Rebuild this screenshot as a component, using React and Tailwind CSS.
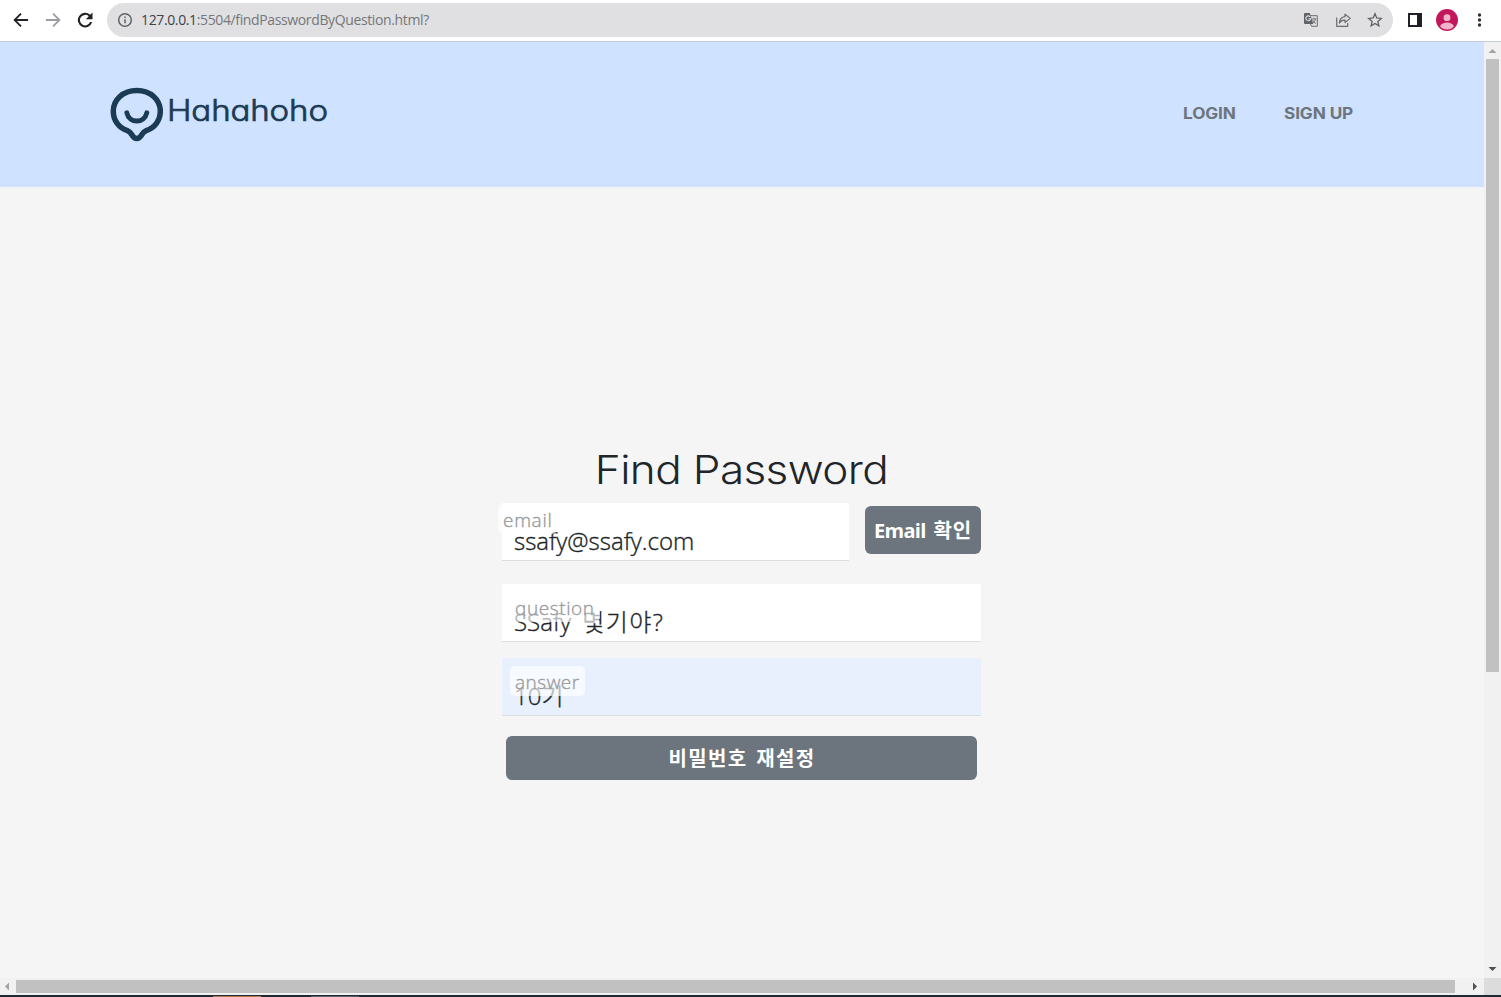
const bar = "flex items-center";

function Toolbar() {
  return (
    <div className={`${bar} h-[42px] shrink-0 border-b border-[#c4cbd6] bg-white pb-px`}>
      <svg className="ml-[11px] shrink-0" width="20" height="20" viewBox="0 0 24 24" fill="#202124">
        <path d="M20.5 10.9H7.1l5.7-5.7L11.2 3.600 2.800 12l8.400 8.400 1.600-1.600-5.700-5.700h13.400z" />
      </svg>
      <svg className="ml-3 shrink-0" width="20" height="20" viewBox="0 0 24 24" fill="#9b9da0">
        <path d="M3.500 10.900h13.400l-5.700-5.700 1.600-1.600 8.400 8.400-8.400 8.400-1.600-1.600 5.700-5.700H3.500z" />
      </svg>
      <svg className="ml-3 shrink-0" width="20" height="20" viewBox="0 0 24 24" fill="#202124">
        <path d="M18.2 5.800A8.750 8.750 0 1 0 20.600 14.500h-2.500A6.300 6.300 0 1 1 16.500 7.500L13 11h8V3z" />
      </svg>
      <div className={`${bar} ml-3 h-[34px] w-[1286px] rounded-full bg-[#e0e0e2] pl-[10px] pr-[10px]`}>
        <svg width="16" height="16" viewBox="0 0 16 16" fill="none" stroke="#5f6368" strokeWidth="1.5">
          <circle cx="8" cy="8" r="6.300" />
          <path d="M8 7.200v4M8 4.400v1.600" />
        </svg>
        <div className="ml-2 grow pb-px font-['Open_Sans',sans-serif] text-[14px] tracking-[-0.370px] text-[#75777a]">
          <span className="text-[#404246]">127.0.0.1</span>:5504/findPasswordByQuestion.html?
        </div>
        <svg width="16" height="16" viewBox="0 0 16 16">
          <path d="M6 3.700h8.300v10.600H8.600L7 11" fill="none" stroke="#6b6d70" />
          <path d="M2 1h4.800l3.500 11H2a1 1 0 0 1-1-1V2a1 1 0 0 1 1-1z" fill="#5f6368" />
          <path d="M7.300 5A2.400 2.400 0 1 0 7.600 6.800H5.400" fill="none" stroke="#e0e0e2" strokeWidth="1.100" />
          <path d="M8.800 7h4.600M11 5.800V7M12.600 7c-.3 1.700-1.400 3-2.600 4M9.600 8c.7 1.600 2 2.800 3.300 3.600" fill="none" stroke="#6b6d70" strokeWidth=".9" />
        </svg>
        <svg className="ml-4" width="17" height="16" viewBox="0 0 17 16" fill="none" stroke="#6b6d70" strokeWidth="1.200" strokeLinejoin="round">
          <path d="M1.700 5.500v8.800h11V11" />
          <path d="M10 2.200 15.300 6.400 10 10.500V8.200C7.400 8 5.600 9 4.300 11.100 4.600 7.500 6.700 5 10 4.700z" />
        </svg>
        <svg className="ml-[15px]" width="16" height="16" viewBox="0 0 16 16" fill="none" stroke="#5f6368" strokeWidth="1.300">
          <path d="m8 1.800 1.750 4.200 4.550.4-3.450 3 1.040 4.450L8 11.500l-3.890 2.350L5.150 9.400l-3.450-3L6.250 6z" />
        </svg>
      </div>
      <svg className="ml-[15px] shrink-0" width="14" height="14" viewBox="0 0 14 14">
        <path d="M0 0h14v14H0z" fill="#202124" />
        <path d="M2 2h7v10H2z" fill="#fff" />
      </svg>
      <svg className="ml-[14px] shrink-0" width="22" height="22" viewBox="0 0 22 22">
        <circle cx="11" cy="11" r="11" fill="#c2185b" />
        <circle cx="11" cy="8.700" r="3.400" fill="#f0b4cd" />
        <path d="M4 17.200c1.200-2.700 4-3.800 7-3.800s5.800 1.100 7 3.800A9.500 9.500 0 0 1 11 20.500a9.500 9.500 0 0 1-7-3.300z" fill="#f0b4cd" />
      </svg>
      <svg className="ml-[19px] shrink-0" width="5" height="16" viewBox="0 0 5 16" fill="#303134">
        <circle cx="2.500" cy="3" r="1.700" />
        <circle cx="2.500" cy="8" r="1.700" />
        <circle cx="2.500" cy="13" r="1.700" />
      </svg>
    </div>
  );
}

function Header() {
  return (
    <header className="flex h-[145px] shrink-0 items-center bg-[#cfe2ff] pl-[110px] pr-[130px] font-[Inter,sans-serif]">
      <svg className="shrink-0" width="53" height="55" viewBox="0 0 53 55" fill="none" stroke="#1b3a54" strokeLinecap="round" strokeLinejoin="round">
        <path strokeWidth="5.500" d="M26.800 3.500C13.100 3.500 3.300 12.600 3.300 24.200c0 9.300 5.600 16.600 14.100 19.400 2.300.8 3.200 2.100 4.500 4.200 2.800 4.800 7 4.800 9.800 0 1.300-2.100 2.200-3.400 4.500-4.200 8.500-2.800 14.100-10.100 14.100-19.400C50.300 12.600 40.500 3.500 26.800 3.500z" />
        <path strokeWidth="4.900" d="M16.800 25.800C19.100 36.800 34.500 36.800 36.800 25.800" />
      </svg>
      <span className="-mt-[10px] ml-[4px] origin-left scale-x-[1.120] text-[29.500px] font-light leading-10 tracking-[-0.100px] text-[#1b3a54] [-webkit-text-stroke:0.700px_#1b3a54] [font-feature-settings:'cv11'] [stroke-linejoin:round]">Hahahoho</span>
      <nav className="-mt-0.5 ml-auto flex gap-12 whitespace-nowrap text-[15.500px] font-bold text-[#6c757d]">
        <a className="w-[53px] origin-left scale-x-[1.110] tracking-[-0.100px]">LOGIN</a>
        <a className="w-[70px] origin-left scale-x-[1.110] tracking-[-0.100px]">SIGN UP</a>
      </nav>
    </header>
  );
}

const field = "relative h-[58px] border-b border-[#dcdee1] pl-3 pt-[20px] text-[24px] font-light leading-[36px] text-[#212529] [-webkit-text-stroke:0.350px]";
const label = "absolute h-[30px] rounded-[5px] bg-white/65 px-[5px] text-[19px] leading-[32px] text-[#999b9d]";
const button = "flex items-center justify-center rounded-[6px] bg-[#6c757d] font-bold text-white";

function Form() {
  return (
    <form className="ml-[502px] mt-[259px] w-[479px] font-['Open_Sans','Noto_Sans_CJK_KR',sans-serif]">
      <h1 className="h-[57px] scale-x-[1.130] whitespace-nowrap text-center font-[Inter,sans-serif] text-[39px] font-light leading-[48px] tracking-[-0.550px] text-[#212529]">Find Password</h1>
      <div className="flex gap-4">
        <div className={`${field} w-[347px] bg-white`}>
          ssafy@ssafy.com
          <span className={`${label} -left-1 top-px tracking-[0.700px]`}>email</span>
        </div>
        <div className={`${button} mt-[3px] h-12 w-[116px] pt-px text-[20px]`}>
          <span className="mr-[8px] tracking-[-0.700px]">Email</span>
          <span className="tracking-[0.800px]">확인</span>
        </div>
      </div>
      <div className={`${field} mt-[23px] bg-white`}>
        SSafy<span className="ml-[11px] tracking-[1.500px]">몇기야?</span>
        <span className={`${label} left-2 top-[8px] tracking-[0.600px]`}>question</span>
      </div>
      <div className={`${field} mt-4 bg-[#e8f0fe]`}>
        10기
        <span className={`${label} left-2 top-[8px] tracking-[0.500px]`}>answer</span>
      </div>
      <div className={`${button} mx-1 mt-5 h-11 pt-0.5 pl-px text-[20px] tracking-[1.350px] [word-spacing:2px]`}>비밀번호 재설정</div>
    </form>
  );
}

function Arrow({ d, fill }) {
  return (
    <svg className="shrink-0" width="17" height="17" viewBox="0 0 17 17" fill={fill}>
      <path d={d} />
    </svg>
  );
}

export default function App() {
  return (
    <div className="flex h-[997px] w-[1501px] flex-col overflow-hidden bg-[#f5f5f5]">
      <Toolbar />
      <div className="flex h-[936px] shrink-0">
        <main className="flex w-[1484px] flex-col">
          <Header />
          <Form />
        </main>
        <div className="flex w-[17px] flex-col items-center bg-[#f1f1f1]">
          <Arrow d="M4.500 11h8l-4-4z" fill="#a3a3a3" />
          <div className="h-[613px] w-[13px] bg-[#c1c1c1]" />
          <div className="grow" />
          <Arrow d="M4.500 6h8l-4 4z" fill="#505050" />
        </div>
      </div>
      <div className="flex h-[17px] shrink-0 items-center bg-[#f1f1f1]">
        <div className="flex w-4 shrink-0">
          <Arrow d="M9 4.500v8l-4-4z" fill="#a3a3a3" />
        </div>
        <div className="h-[13px] w-[1439px] bg-[#c1c1c1]" />
        <div className="grow" />
        <Arrow d="M6 4.500v8l4-4z" fill="#505050" />
        <div className="h-full w-[17px] bg-[#dcdcdc]" />
      </div>
      <div className="flex h-[2px] shrink-0 items-end bg-[#202a33]">
        <div className="ml-[213px] h-px w-12 bg-[#b87a50]" />
        <div className="ml-[50px] h-px w-12 bg-[#5a6067]" />
      </div>
    </div>
  );
}
